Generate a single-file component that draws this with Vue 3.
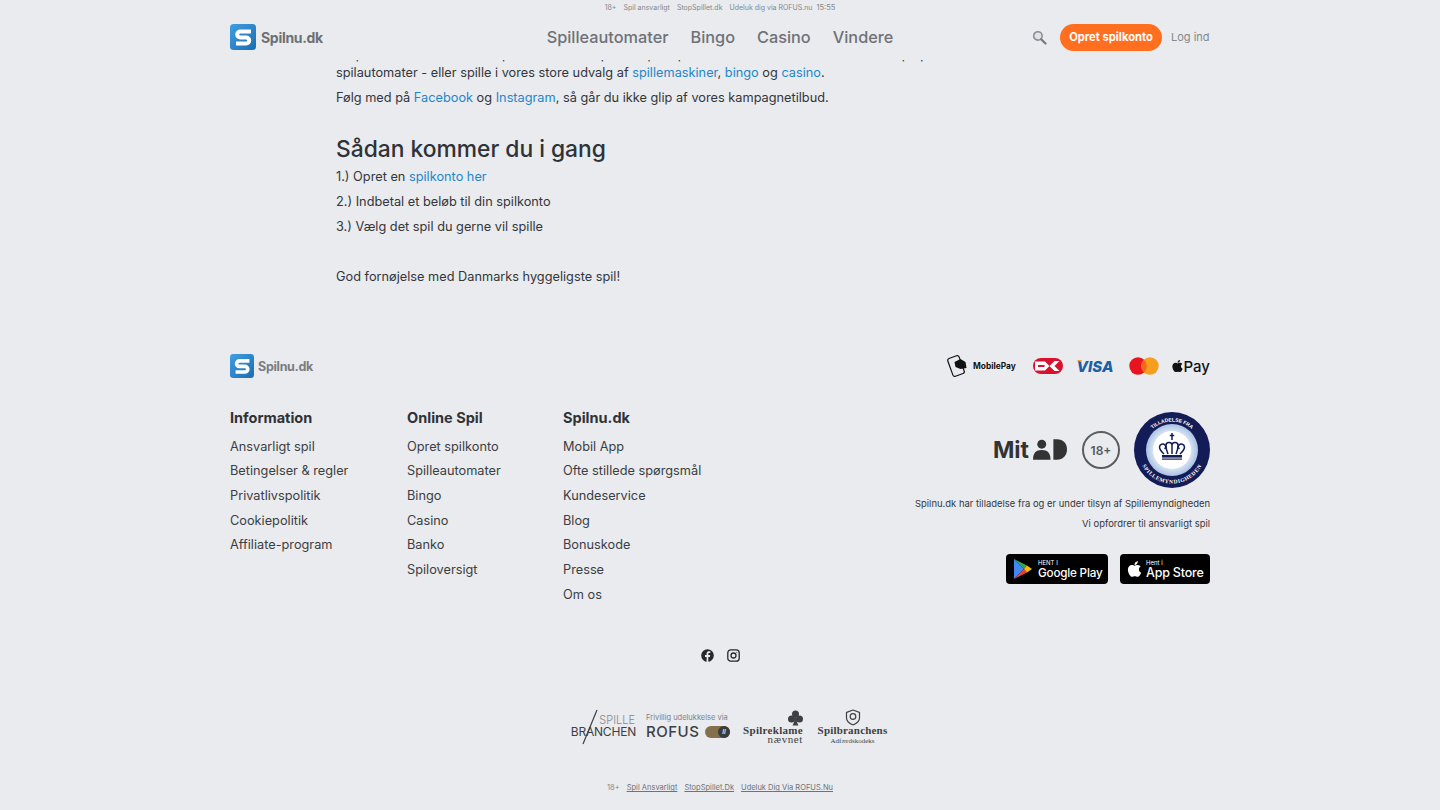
<template>
  <div class="page">
    <header class="header">
      <div class="topbar">
        <span>18+</span>
        <span>Spil ansvarligt</span>
        <span>StopSpillet.dk</span>
        <span>Udeluk dig via ROFUS.nu</span>
        <span class="clock">15:55</span>
      </div>
      <div class="navrow">
        <div class="brand">
          <svg class="logo" viewBox="0 0 26 26">
            <defs>
              <linearGradient id="lg" x1="0" y1="0" x2="1" y2="1">
                <stop offset="0" stop-color="#3f9fe2" />
                <stop offset="1" stop-color="#1d6cb0" />
              </linearGradient>
            </defs>
            <rect width="26" height="26" rx="3.5" fill="url(#lg)" />
            <path d="M21 7.5H10.2a3 3 0 0 0 0 6h6a3 3 0 0 1 0 6H6" fill="none" stroke="#fff" stroke-width="4" />
          </svg>
          <span class="brandname">Spilnu.dk</span>
        </div>
        <nav class="mainnav">
          <a v-for="item in navItems" :key="item">{{ item }}</a>
        </nav>
        <div class="actions">
          <svg class="search" viewBox="0 0 16 16">
            <circle cx="6.3" cy="6.3" r="4.5" fill="#dfe2e6" stroke="#8b8e92" stroke-width="1.7" />
            <path d="M9.8 9.8l4.6 4.6" stroke="#77797d" stroke-width="2.4" stroke-linecap="round" />
          </svg>
          <a class="cta">Opret spilkonto</a>
          <a class="login">Log ind</a>
        </div>
      </div>
    </header>

    <main class="content">
      <p class="clipped">Stop forbi hos vores store spil hvor du kan spille nu på top slots hver eneste aften med os alle på p</p>
      <p>spilautomater - eller spille i vores store udvalg af <a>spillemaskiner</a>, <a>bingo</a> og <a>casino</a>.</p>
      <p>Følg med på <a>Facebook</a> og <a>Instagram</a>, så går du ikke glip af vores kampagnetilbud.</p>
      <h2>Sådan kommer du i gang</h2>
      <p>1.) Opret en <a>spilkonto her</a></p>
      <p>2.) Indbetal et beløb til din spilkonto</p>
      <p>3.) Vælg det spil du gerne vil spille</p>
      <p class="gap">God fornøjelse med Danmarks hyggeligste spil!</p>
    </main>

    <footer class="footer">
      <div class="foot-top">
        <div class="brand foot-brand">
          <svg class="logo small" viewBox="0 0 26 26">
            <rect width="26" height="26" rx="3.5" fill="url(#lg)" />
            <path d="M21 7.5H10.2a3 3 0 0 0 0 6h6a3 3 0 0 1 0 6H6" fill="none" stroke="#fff" stroke-width="4" />
          </svg>
          <span class="brandname foot-name">Spilnu.dk</span>
        </div>
        <div class="payments">
          <svg class="mobilepay" width="70" height="24" viewBox="0 0 70 24">
            <g transform="translate(-1.500 0)">
              <rect x="3.5" y="2.5" width="12" height="19" rx="2" transform="rotate(-20 9.5 12)" fill="#e9ebef" stroke="#111" stroke-width="1.2" />
              <path d="M8 8l6-3 5 3 1 6-6 1-5-2z" fill="#111" />
            </g>
            <text x="25" y="15" class="mp">MobilePay</text>
          </svg>
          <svg width="30" height="18" viewBox="0 0 30 18">
            <rect width="30" height="16" y="1" rx="8" fill="#d8112e" />
            <path d="M2 4.500h10l4.500 4.500-4.500 4.500H2z" fill="#fff" />
            <path d="M5 8h6l1 1-1 1H5z" fill="#d8112e" />
            <path d="M16.500 9l5-5h5l-5 5 5 5h-5z" fill="#fff" />
          </svg>
          <span class="visa"><i class="visa-tip"></i>VISA</span>
          <svg width="30" height="18" viewBox="0 0 30 18">
            <circle cx="9" cy="9" r="8.7" fill="#e8141e" />
            <circle cx="21" cy="9" r="8.7" fill="#f69e1e" />
            <path d="M15 2.6a8.7 8.7 0 0 1 0 12.8a8.7 8.7 0 0 1 0-12.8z" fill="#f5671f" />
          </svg>
          <div class="applepay">
            <svg width="11" height="14" viewBox="0 0 384 512"><path :d="applePath" fill="#111" /></svg>
            <span>Pay</span>
          </div>
        </div>
      </div>

      <div class="foot-main">
        <div class="foot-col" v-for="col in columns" :key="col.title" :style="{ width: col.width + 'px' }">
          <h3>{{ col.title }}</h3>
          <a v-for="link in col.links" :key="link">{{ link }}</a>
        </div>
        <div class="foot-right">
          <div class="badges">
            <div class="mitid">
              <span>Mit</span>
              <svg width="34" height="22" viewBox="0 0 35 22">
                <circle cx="9" cy="5" r="4.6" fill="#333" />
                <path d="M0 21c0-7 3-10 9-10s9 3 9 10z" fill="#333" />
                <path d="M21 0h3.500c7 0 10.500 4.500 10.500 10.500S31 21 24.500 21H21z" fill="#333" />
              </svg>
            </div>
            <div class="age">18+</div>
            <svg class="seal" viewBox="0 0 76 76">
              <defs>
                <path id="arcTop" d="M9.500 38a28.500 28.500 0 0 1 57 0" />
                <path id="arcBottom" d="M4.500 38a33.500 33.500 0 0 0 67 0" />
                <radialGradient id="ring">
                  <stop offset=".7" stop-color="#dbe6f4" />
                  <stop offset="1" stop-color="#a9c1e3" />
                </radialGradient>
              </defs>
              <circle cx="38" cy="38" r="38" fill="#131c57" />
              <circle cx="38" cy="38" r="26" fill="url(#ring)" />
              <circle cx="38" cy="38" r="19" fill="#fff" />
              <text class="seal-top"><textPath href="#arcTop" startOffset="50%" text-anchor="middle">TILLADELSE FRA</textPath></text>
              <text class="seal-bottom"><textPath href="#arcBottom" startOffset="50%" text-anchor="middle">SPILLEMYNDIGHEDEN</textPath></text>
              <g fill="none" stroke="#131c57" stroke-width="1.500">
                <path d="M38 21v7M35.800 23.500h4.400" />
                <path d="M30 42c-2-2-4.500-4-4.500-7a3.200 3.200 0 0 1 5.500-2c1 1 1 3-.5 4" />
                <path d="M46 42c2-2 4.500-4 4.500-7a3.200 3.200 0 0 0-5.500-2c-1 1-1 3 .5 4" />
                <path d="M34 42c-1-3-2-5-2-8a3 3 0 0 1 6-1a3 3 0 0 1 6 1c0 3-1 5-2 8" />
                <path d="M38 33v9" />
              </g>
              <rect x="28" y="43" width="20" height="2.600" fill="#131c57" />
              <rect x="28" y="46.500" width="20" height="1.200" fill="#131c57" />
            </svg>
          </div>
          <p>Spilnu.dk har tilladelse fra og er under tilsyn af Spillemyndigheden</p>
          <p>Vi opfordrer til ansvarligt spil</p>
          <div class="stores">
            <div class="store gplay">
              <svg width="20" height="22" viewBox="0 0 20 22">
                <path d="M1 1l10 10L1 21z" fill="#4285f4" />
                <path d="M1 1l13 6.500L11 11z" fill="#34a853" />
                <path d="M1 21l13-6.500L11 11z" fill="#ea4335" />
                <path d="M14 7.500l5 3.500-5 3.500L11 11z" fill="#fbbc04" />
              </svg>
              <div class="store-text">
                <small>HENT I</small>
                <strong>Google Play</strong>
              </div>
            </div>
            <div class="store appstore">
              <svg width="15" height="18" viewBox="0 0 384 512"><path :d="applePath" fill="#fff" /></svg>
              <div class="store-text">
                <small>Hent i</small>
                <strong>App Store</strong>
              </div>
            </div>
          </div>
        </div>
      </div>

      <div class="social">
        <svg width="13" height="13" viewBox="0 0 13 13">
          <circle cx="6.500" cy="6.500" r="6.300" fill="#26282b" />
          <path d="M7.300 13V7.900h1.600l.3-1.900H7.300V4.900c0-.6.300-1 1-1h1V2.300c-1.900-.3-3.700 0-3.700 2.400V6H4v1.900h1.600V13z" fill="#e9ebef" />
        </svg>
        <svg width="13" height="13" viewBox="0 0 13 13" fill="none" stroke="#26282b" stroke-width="1.300">
          <rect x=".8" y=".8" width="11.400" height="11.400" rx="3" />
          <circle cx="6.500" cy="6.500" r="2.500" />
          <circle cx="9.800" cy="3.200" r=".5" fill="#26282b" stroke="none" />
        </svg>
      </div>

      <div class="partners">
        <div class="p-branchen">
          <svg class="slash" width="16" height="36" viewBox="0 0 16 36"><path d="M15 1L1 35" stroke="#3d3f43" stroke-width="1.200" /></svg>
          <span class="pb-top">SPILLE</span>
          <span class="pb-bottom">BRANCHEN</span>
        </div>
        <div class="p-rofus">
          <span class="rf-top">Frivillig udelukkelse via</span>
          <div class="rf-row">
            <span>ROFUS</span>
            <i class="toggle"><b>II</b></i>
          </div>
        </div>
        <div class="p-reklame">
          <svg class="club" width="15" height="16" viewBox="0 0 15 16" fill="#3d3f43">
            <circle cx="7.500" cy="4" r="3.500" />
            <circle cx="3.500" cy="9" r="3.500" />
            <circle cx="11.500" cy="9" r="3.500" />
            <path d="M6.800 6h1.400c0 4 .8 7 2.300 9.500h-6C6 13 6.800 10 6.800 6z" />
          </svg>
          <strong>Spilreklame</strong>
          <span>nævnet</span>
        </div>
        <div class="p-kodeks">
          <svg width="16" height="17" viewBox="0 0 15 17" fill="none" stroke="#3d3f43" stroke-width="1.200">
            <path d="M7.500 1L14 3.500V9c0 3-3 5.500-6.500 7" />
            <path d="M7.500 1L1 3.500V9c0 3 3 5.500 6.500 7" />
            <circle cx="7.500" cy="7.500" r="2.800" />
          </svg>
          <strong>Spilbranchens</strong>
          <span>Adfærdskodeks</span>
        </div>
      </div>

      <div class="bottom">
        <span>18+</span>
        <a>Spil Ansvarligt</a>
        <a>StopSpillet.Dk</a>
        <a>Udeluk Dig Via ROFUS.Nu</a>
      </div>
    </footer>
  </div>
</template>

<script setup>
const navItems = ['Spilleautomater', 'Bingo', 'Casino', 'Vindere']

const columns = [
  {
    title: 'Information',
    width: 177,
    links: ['Ansvarligt spil', 'Betingelser & regler', 'Privatlivspolitik', 'Cookiepolitik', 'Affiliate-program']
  },
  {
    title: 'Online Spil',
    width: 156,
    links: ['Opret spilkonto', 'Spilleautomater', 'Bingo', 'Casino', 'Banko', 'Spiloversigt']
  },
  {
    title: 'Spilnu.dk',
    width: 170,
    links: ['Mobil App', 'Ofte stillede spørgsmål', 'Kundeservice', 'Blog', 'Bonuskode', 'Presse', 'Om os']
  }
]

const applePath =
  'M318.7 268.7c-.2-36.7 16.4-64.4 50-84.8-18.8-26.9-47.2-41.7-84.7-44.6-35.5-2.8-74.3 20.7-88.5 20.7-15 0-49.4-19.7-76.4-19.7C63.3 141.2 4 184.8 4 273.5q0 39.3 14.4 81.2c12.8 36.7 59 126.7 107.2 125.2 25.2-.6 43-17.9 75.8-17.9 31.8 0 48.3 17.9 76.4 17.9 48.6-.7 90.4-82.5 102.6-119.3-65.2-30.7-61.7-90-61.7-91.9zm-56.6-164.2c27.3-32.4 24.8-61.9 24-72.5-24.1 1.4-52 16.4-67.9 34.9-17.5 19.8-27.8 44.3-25.6 71.9 26.1 2 49.9-11.4 69.5-34.3z'
</script>

<style>
html, body {
  margin: 0;
  background: #e9ebef;
  overflow: hidden;
}
</style>

<style scoped>
.page {
  height: 810px;
  overflow: hidden;
  background: #e9ebef;
  color: #33363a;
  font-family: Inter, "Noto Sans", sans-serif;
  font-size: 12.75px;
}
a { text-decoration: none; }

.header {
  position: fixed;
  top: 0;
  left: 0;
  right: 0;
  height: 60px;
  background: #e9ebef;
  z-index: 5;
}
.topbar {
  height: 14px;
  display: flex;
  justify-content: center;
  align-items: center;
  gap: 7px;
  font-size: 7px;
  color: #85888c;
}
.clock { font-size: 7.500px; margin-left: -3px; }
.navrow {
  width: 980px;
  height: 46px;
  margin: 0 auto;
  display: grid;
  grid-template-columns: 1fr auto 1fr;
  align-items: center;
}
.brand {
  display: flex;
  align-items: center;
  gap: 5px;
}
.foot-brand { gap: 4px; }
.logo { width: 26px; height: 26px; }
.logo.small { width: 24px; height: 24px; }
.brandname {
  font-size: 14px;
  letter-spacing: -.3px;
  font-weight: 700;
  color: #6d7074;
}
.foot-name { font-size: 12.500px; color: #7a7d81; }
.mainnav {
  display: flex;
  gap: 22px;
  font-size: 16.300px;
  font-weight: 500;
  color: #6f7276;
}
.actions {
  display: flex;
  justify-content: flex-end;
  align-items: center;
}
.search { width: 15px; height: 15px; margin-right: 13px; }
.cta {
  height: 27px;
  width: 102px;
  display: flex;
  align-items: center;
  justify-content: center;
  border-radius: 14px;
  background: #ff6f1f;
  color: #fff;
  font-size: 11.200px;
  font-weight: 700;
}
.login {
  width: 38px;
  margin-left: 9px;
  margin-right: 1px;
  font-size: 11px;
  color: #85888c;
  white-space: nowrap;
}

.content {
  width: 768px;
  margin: 0 auto;
  padding-top: 46px;
}
.content p {
  margin: 0 0 7px;
  line-height: 18px;
  white-space: nowrap;
}
.content a { color: #1f87c9; }
.content .clipped { margin-bottom: 0; }
.content .gap { margin-top: 32px; }
.content h2 {
  margin: 27px 0 4px;
  font-size: 22.800px;
  line-height: 30px;
  font-weight: 500;
  color: #2f3236;
}

.footer {
  width: 980px;
  margin: 67px auto 0;
}
.foot-top {
  display: flex;
  justify-content: space-between;
  align-items: center;
  height: 26px;
}
.payments {
  display: flex;
  align-items: center;
  gap: 14px;
}
.mobilepay { margin-right: 1px; overflow: visible; }
.mp { font: 700 8.400px Inter, sans-serif; fill: #111; }
.visa {
  position: relative;
  width: 38px;
  font-size: 15px;
  font-style: italic;
  font-weight: 800;
  color: #1a5fa8;
  white-space: nowrap;
}
.visa-tip {
  position: absolute;
  left: -1px;
  top: 3px;
  width: 6px;
  height: 3px;
  background: #e8a33a;
  clip-path: polygon(0 0, 100% 0, 100% 100%);
}
.applepay {
  display: flex;
  align-items: center;
  gap: 1px;
  margin-left: -1px;
  font-size: 15px;
  font-weight: 500;
  color: #111;
}

.foot-main { display: flex; }
.foot-col {
  margin-top: 28px;
  display: flex;
  flex-direction: column;
  align-items: flex-start;
}
.foot-col h3 {
  margin: 0 0 5.500px;
  font-size: 14.500px;
  line-height: 22px;
  font-weight: 700;
  color: #2f3236;
}
.foot-col a {
  line-height: 24.700px;
  color: #3b3e42;
}
.foot-right {
  flex: 1;
  margin-top: 33px;
  display: flex;
  flex-direction: column;
  align-items: flex-end;
}
.foot-right p {
  margin: 0;
  font-size: 9.450px;
  line-height: 20px;
  color: #33363a;
}
.badges {
  display: flex;
  align-items: center;
  gap: 14px;
  height: 76px;
  margin-bottom: 6px;
}
.mitid {
  display: flex;
  align-items: center;
  gap: 4px;
  margin-right: 1px;
  font-size: 23px;
  font-weight: 700;
  color: #333;
}
.age {
  width: 34px;
  height: 34px;
  border: 2px solid #5b5d61;
  border-radius: 50%;
  display: flex;
  align-items: center;
  justify-content: center;
  font-size: 12px;
  font-weight: 600;
  color: #55575b;
}
.seal { width: 76px; height: 76px; }
.seal-top { font: 700 5px "Liberation Sans", sans-serif; fill: #fff; }
.seal-bottom { font: 700 5.500px "Liberation Serif", serif; fill: #fff; letter-spacing: .6px; }
.stores {
  display: flex;
  gap: 12px;
  margin-top: 20px;
}
.store {
  height: 30px;
  background: #000;
  color: #fff;
  border-radius: 4px;
  display: flex;
  align-items: center;
  gap: 5px;
  box-sizing: border-box;
  padding-left: 7px;
}
.gplay { width: 102px; }
.appstore { width: 90px; gap: 4px; }
.store-text { display: flex; flex-direction: column; }
.store-text small { font-size: 6px; line-height: 7px; }
.store-text strong { font-size: 11.700px; letter-spacing: -.2px; line-height: 14px; font-weight: 500; white-space: nowrap; }
.appstore .store-text strong { font-size: 12.500px; }

.social {
  display: flex;
  justify-content: center;
  gap: 13px;
  margin-top: 42px;
}
.partners {
  display: flex;
  justify-content: center;
  align-items: center;
  gap: 10px;
  margin-top: 46px;
  height: 40px;
  padding-left: 18px;
  color: #3d3f43;
}
.p-branchen {
  position: relative;
  width: 66px;
  height: 40px;
  box-sizing: border-box;
  display: flex;
  flex-direction: column;
  align-items: flex-end;
  padding-top: 7px;
}
.slash { position: absolute; left: 12px; top: 1px; }
.pb-top { font-size: 11px; line-height: 11px; font-weight: 300; color: #85888c; margin-right: 1px; }
.pb-bottom { font-size: 12px; line-height: 12px; font-weight: 400; letter-spacing: -.2px; }
.p-rofus { width: 84px; margin-bottom: 2px; display: flex; flex-direction: column; }
.rf-top { font-size: 7.500px; color: #808387; white-space: nowrap; }
.rf-row { display: flex; align-items: center; justify-content: space-between; font-size: 15px; font-weight: 500; letter-spacing: .5px; }
.toggle {
  width: 25px;
  height: 12px;
  border-radius: 6px;
  background: #85704d;
  display: flex;
  justify-content: flex-end;
}
.toggle b {
  width: 12px;
  height: 12px;
  border-radius: 50%;
  background: #3b3b3b;
  color: #ddd;
  font-size: 6px;
  letter-spacing: 0;
  text-align: center;
  line-height: 12px;
}
.p-reklame, .p-kodeks {
  display: flex;
  flex-direction: column;
  margin-bottom: 2px;
  font-family: "Liberation Serif", "DejaVu Serif", serif;
}
.p-reklame { align-items: flex-end; width: 62px; margin-left: 1px; font-size: 11px; line-height: 10px; }
.p-reklame strong { letter-spacing: .3px; white-space: nowrap; }
.p-reklame span:last-child { letter-spacing: .6px; margin-top: -1px; }
.club { margin-bottom: -1px; }
.p-kodeks { align-items: center; width: 71px; margin-left: 4px; }
.p-kodeks strong { font-size: 11px; line-height: 13px; letter-spacing: .2px; white-space: nowrap; margin-top: -2px; }
.p-kodeks span { font-size: 7px; line-height: 9px; }

.bottom {
  display: flex;
  justify-content: center;
  gap: 7px;
  margin-top: 35px;
  font-size: 7.500px;
  color: #85888c;
}
.bottom a {
  color: #6f7276;
  text-decoration: underline;
}
</style>
